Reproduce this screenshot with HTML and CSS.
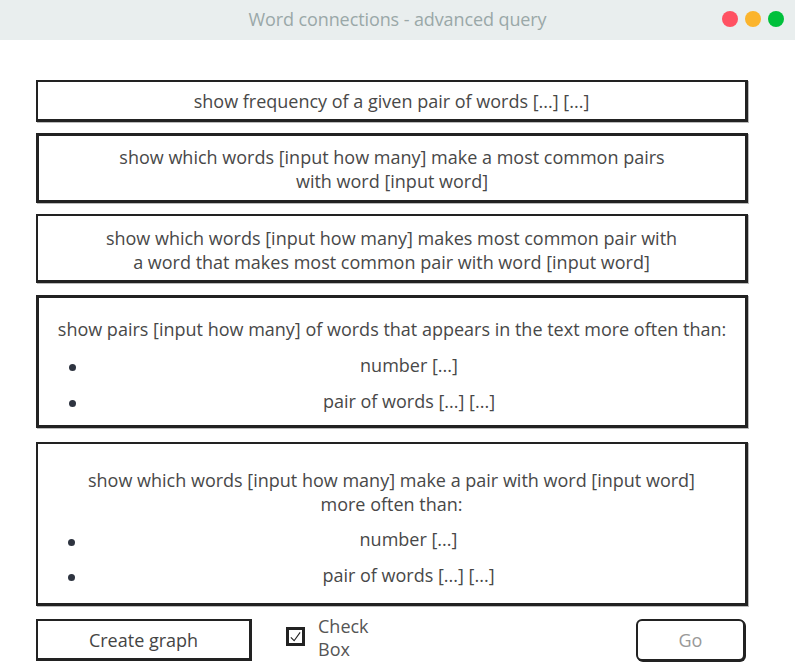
FILE: index.html
```html
<!DOCTYPE html>
<html>
<head>
<meta charset="utf-8">
<link rel="stylesheet" href="styles.css">
</head>
<body>
<div class="titlebar">
  <div class="title">Word connections - advanced query</div>
  <div class="lights">
    <span class="light red"></span>
    <span class="light yellow"></span>
    <span class="light green"></span>
  </div>
</div>
<main class="content">
  <div class="box box1">show frequency of a given pair of words [...] [...]</div>
  <div class="box box2">show which words [input how many] make a most common pairs<br>with word [input word]</div>
  <div class="box box3">show which words [input how many] makes most common pair with<br>a word that makes most common pair with word [input word]</div>
  <div class="box box4">
    <div class="lead">show pairs [input how many] of words that appears in the text more often than:</div>
    <ul class="opts">
      <li>number [...]</li>
      <li>pair of words [...] [...]</li>
    </ul>
  </div>
  <div class="box box5">
    <div class="lead">show which words [input how many] make a pair with word [input word]<br>more often than:</div>
    <ul class="opts">
      <li>number [...]</li>
      <li>pair of words [...] [...]</li>
    </ul>
  </div>
  <div class="actions">
    <button class="btn create">Create graph</button>
    <label class="check">
      <span class="checkbox"><svg width="14" height="14" viewBox="0 0 14 14"><path d="M2 7.5 L5.5 11 L12 2" fill="none" stroke="#222" stroke-width="1.2"/></svg></span>
      <span class="check-label">Check<br>Box</span>
    </label>
    <button class="btn go">Go</button>
  </div>
</main>
</body>
</html>
```
FILE: styles.css
```css
* { box-sizing: border-box; }
html, body { margin: 0; padding: 0; background: #fff; }
body {
  font-family: "Open Sans", "Noto Sans", sans-serif;
  color: #484848;
  width: 795px;
  height: 666px;
  overflow: hidden;
}
.titlebar {
  height: 40px;
  background: #e9eeee;
  display: flex;
  align-items: center;
  justify-content: center;
  position: relative;
}
.title {
  font-size: 18px;
  color: #9aa8a8;
  letter-spacing: -0.1px;
  margin-top: -2px;
}
.lights {
  position: absolute;
  right: 11px;
  top: 11px;
  display: flex;
  gap: 7px;
}
.light {
  width: 16px;
  height: 16px;
  border-radius: 50%;
  display: block;
}
.red { background: #ff5162; }
.yellow { background: #fbb42c; }
.green { background: #00c03b; }

.content {
  padding: 40px 0 0 36px;
  width: 748px;
  display: flex;
  flex-direction: column;
}
.box {
  border: 3px solid #222;
  box-shadow: 1px 1px 0 #bbb;
  text-align: center;
  font-size: 18px;
  line-height: 24px;
}
.box1 { height: 42px; padding-top: 7px; margin-bottom: 11px; border-width: 2px 3px 3px 2px; }
.box2 { height: 70px; padding-top: 9px; margin-bottom: 11px; }
.box3 { height: 69px; padding-top: 10px; margin-bottom: 12px; border-width: 2px 3px 3px 2px; }
.box4 { height: 133px; padding-top: 19px; margin-bottom: 14px; }
.box5 { height: 164px; padding-top: 24px; margin-bottom: 13px; border-width: 2px 3px 3px 2px; }
.opts {
  list-style: none;
  margin: 0;
  padding: 0 0 0 34px;
}
.opts li {
  position: relative;
  height: 36px;
  line-height: 24px;
  padding-top: 12px;
}
.box5 .opts li { height: 35px; }
.box5 .opts li:first-child { padding-top: 11px; }
.opts li::before {
  content: "";
  position: absolute;
  left: -4px;
  top: 23px;
  width: 7px;
  height: 7px;
  border-radius: 50%;
  background: #2e3440;
}
.actions {
  display: flex;
  align-items: flex-start;
  height: 42px;
}
.btn {
  font-family: "Open Sans", "Noto Sans", sans-serif;
  font-size: 18px;
  background: #fff;
  padding: 0;
  cursor: pointer;
}
.create {
  width: 216px;
  height: 42px;
  border: 3px solid #222;
  border-width: 2px 3px 3px 2px;
  color: #444;
}
.check {
  display: flex;
  align-items: flex-start;
  margin-left: 34px;
  margin-top: -4px;
}
.checkbox {
  width: 19px;
  height: 19px;
  border: 3px solid #222;
  margin-top: 12px;
  display: flex;
  align-items: center;
  justify-content: center;
}
.check-label {
  margin-left: 13px;
  font-size: 18px;
  line-height: 23px;
  color: #555;
}
.go {
  margin-left: auto;
  margin-right: 3px;
  width: 109px;
  height: 42px;
  border: 2px solid #222;
  border-radius: 6px;
  color: #999;
  box-shadow: 1px 1px 0 #222;
}
```
